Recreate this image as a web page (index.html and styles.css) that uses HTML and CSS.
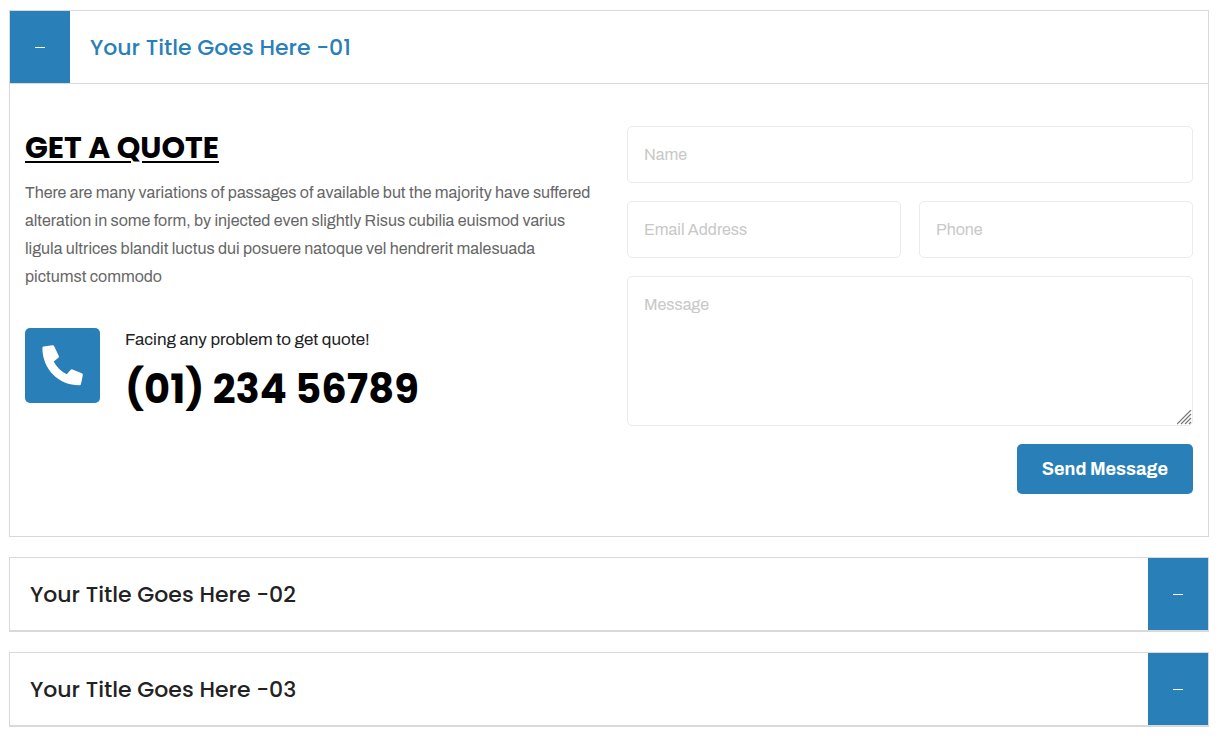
FILE: index.html
```html
<!DOCTYPE html>
<html lang="en">
<head>
<meta charset="utf-8">
<meta name="viewport" content="width=device-width, initial-scale=1">
<title>Get a Quote</title>
<link rel="stylesheet" href="styles.css">
</head>
<body>
<main class="accordion">
  <section class="item item-open">
    <h3 class="item-heading">
      <button class="item-toggle" type="button" aria-expanded="true" aria-controls="panel-1">
        <span class="item-icon"><span class="minus"></span></span>
        <span class="item-title">Your Title Goes Here -01</span>
      </button>
    </h3>
    <div class="panel" id="panel-1">
      <div class="intro">
        <h2 class="intro-title">GET A QUOTE</h2>
        <p class="intro-text">There are many variations of passages of available but the majority have suffered alteration in some form, by injected even slightly Risus cubilia euismod varius ligula ultrices blandit luctus dui posuere natoque vel hendrerit malesuada pictumst commodo</p>
        <div class="contact">
          <span class="contact-icon">
            <svg viewBox="0 0 41 41" width="41" height="41" aria-hidden="true"><path fill="#fff" d="M1.500 1.500L10.300.2Q11.600 0 12.200 1.300L16.800 11Q17.200 12 16.400 12.800L11.700 16.600Q15.800 24.800 24.700 29.300L28.800 24.800Q29.500 24 30.500 24.400L39.800 28.300Q41 28.900 40.800 30.200L39 39Q38.700 40.300 37.400 40.300C16.600 40.300.4 24.200.4 3Q.3 1.700 1.500 1.500Z"/></svg>
          </span>
          <div class="contact-body">
            <p class="contact-label">Facing any problem to get quote!</p>
            <p class="contact-number">(01) 234 56789</p>
          </div>
        </div>
      </div>
      <form class="quote-form">
        <input class="field field-wide" type="text" placeholder="Name" aria-label="Name">
        <input class="field" type="email" placeholder="Email Address" aria-label="Email Address">
        <input class="field" type="tel" placeholder="Phone" aria-label="Phone">
        <textarea class="field field-wide field-message" placeholder="Message" aria-label="Message"></textarea>
        <button class="submit" type="submit">Send Message</button>
      </form>
    </div>
  </section>
  <section class="item">
    <h3 class="item-heading">
      <button class="item-toggle" type="button" aria-expanded="false">
        <span class="item-title">Your Title Goes Here -02</span>
        <span class="item-icon"><span class="minus"></span></span>
      </button>
    </h3>
  </section>
  <section class="item">
    <h3 class="item-heading">
      <button class="item-toggle" type="button" aria-expanded="false">
        <span class="item-title">Your Title Goes Here -03</span>
        <span class="item-icon"><span class="minus"></span></span>
      </button>
    </h3>
  </section>
</main>
</body>
</html>
```
FILE: styles.css
```css
* {
  box-sizing: border-box;
}

body,
h2,
h3,
p {
  margin: 0;
}

body {
  background: #fff;
  font-family: Archivo, "Liberation Sans", Arial, sans-serif;
  font-size: 16px;
}

.accordion {
  display: flex;
  flex-direction: column;
  gap: 20px;
  padding: 10px 13px 10px 9px;
}

.item {
  border: 1px solid #d9d9d9;
}

.item-heading {
  border-bottom: 1px solid #d9d9d9;
}

.item-toggle {
  display: flex;
  width: 100%;
  min-height: 72px;
  padding: 0;
  border: 0;
  background: #fff;
  color: #222;
  font: 500 22px/33px Poppins, Inter, sans-serif;
  text-align: left;
  cursor: pointer;
}

.item-title {
  flex: 1;
  align-self: center;
  padding: 0 20px;
}

.item-open .item-title {
  color: #2980b9;
}

.item-icon {
  display: flex;
  align-items: center;
  justify-content: center;
  align-self: stretch;
  width: 60px;
  background: #2980b9;
}

.minus {
  width: 10px;
  height: 1px;
  background: #fff;
}

.panel {
  display: grid;
  grid-template-columns: 1fr 1fr;
  gap: 36px;
  padding: 42px 15px;
}

.intro-title {
  color: #000;
  font: 700 30px/43px Poppins, Inter, sans-serif;
  text-decoration: underline;
  text-decoration-thickness: 2px;
  text-underline-offset: 3px;
}

.intro-text {
  margin-top: 10px;
  color: #666;
  line-height: 28px;
}

.contact {
  display: flex;
  gap: 25px;
  margin-top: 37px;
}

.contact-icon {
  display: flex;
  flex: none;
  align-items: center;
  justify-content: center;
  width: 75px;
  height: 75px;
  border-radius: 5px;
  background: #2980b9;
}

.contact-label {
  color: #222;
  font-size: 17px;
  line-height: 24px;
}

.contact-number {
  margin-top: 10px;
  color: #000;
  font: 700 40px/54px Poppins, Inter, sans-serif;
}

.quote-form {
  display: grid;
  grid-template-columns: 1fr 1fr;
  gap: 18px;
}

.field {
  width: 100%;
  min-width: 0;
  height: 57px;
  padding: 16px;
  border: 1px solid #ebebeb;
  border-radius: 5px;
  background: #fff;
  color: #222;
  font: inherit;
}

.field::placeholder {
  color: #c8c8c8;
  opacity: 1;
}

.field-wide {
  grid-column: 1 / -1;
}

.field-message {
  height: 150px;
  line-height: 24px;
  resize: vertical;
}

.field-message::-webkit-resizer {
  background: url("data:image/svg+xml,%3Csvg xmlns='http://www.w3.org/2000/svg' width='15' height='15'%3E%3Cpath d='M0 14L14 0M4 14L14 4M8 14L14 8M12 14L14 12' stroke='%23777' stroke-width='1.2'/%3E%3C/svg%3E") no-repeat;
}

.submit {
  grid-column: 1 / -1;
  justify-self: end;
  height: 50px;
  padding: 0 25px;
  border: 0;
  border-radius: 5px;
  background: #2980b9;
  color: #fff;
  font: 700 18px/24px Archivo, "Liberation Sans", Arial, sans-serif;
  cursor: pointer;
}
```
